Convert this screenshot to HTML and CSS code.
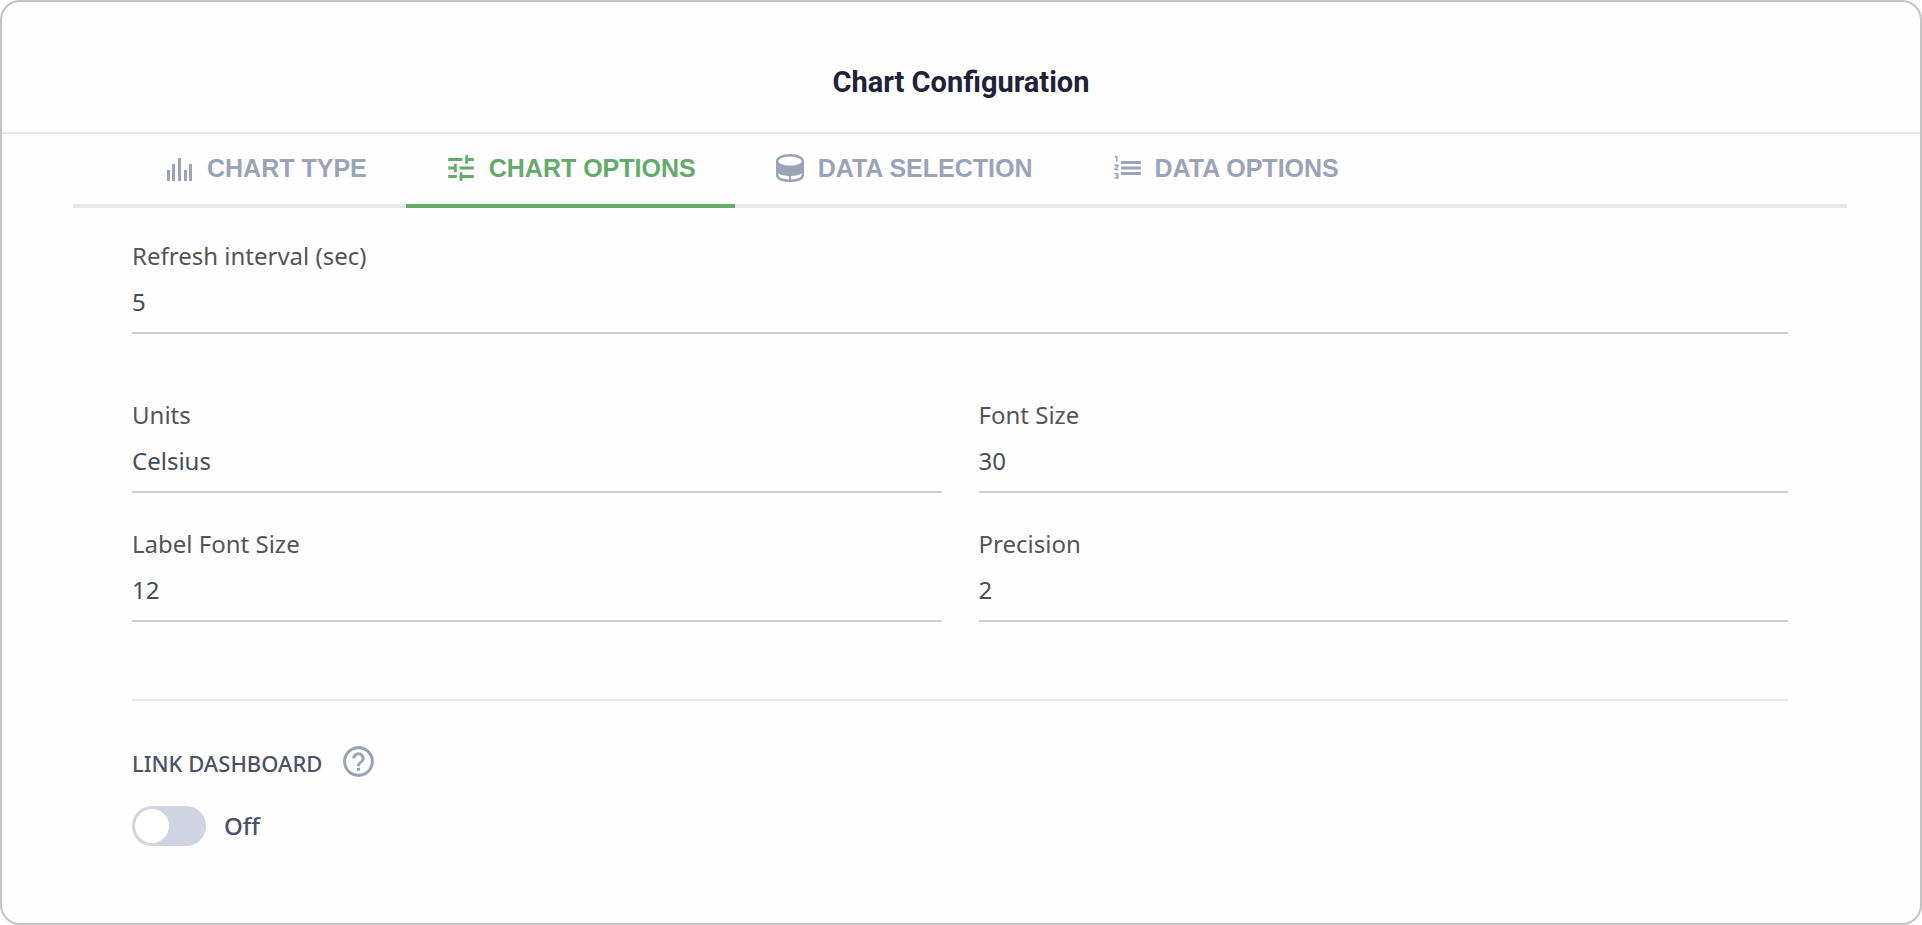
FILE: index.html
```
<!DOCTYPE html>
<html lang="en">
<head>
<meta charset="utf-8">
<title>Chart Configuration</title>
<link rel="stylesheet" href="styles.css">
</head>
<body>
<main class="dialog">
  <header class="dialog-header">
    <h1 class="title">Chart Configuration</h1>
  </header>
  <nav class="tabs" role="tablist">
    <button class="tab" type="button" role="tab">
      <svg class="tab-icon" viewBox="0 0 34 34" aria-hidden="true"><path d="M5 19h3v11H5zM10 13h3v17h-3zM16 7h3v23h-3zM22 19h3v11h-3zM27 13h3v17h-3z"/></svg>
      CHART TYPE
    </button>
    <button class="tab active" type="button" role="tab" aria-selected="true">
      <svg class="tab-icon" viewBox="0 0 24 24" aria-hidden="true"><path d="M3 17v2h6v-2H3zM3 5v2h10V5H3zm10 16v-2h8v-2h-8v-2h-2v6h2zM7 9v2H3v2h4v2h2V9H7zm14 4v-2H11v2h10zm-6-4h2V7h4V5h-4V3h-2v6z"/></svg>
      CHART OPTIONS
    </button>
    <button class="tab" type="button" role="tab">
      <svg class="tab-icon" viewBox="0 0 34 34" aria-hidden="true"><path fill-rule="evenodd" d="M3 10C3 6 9 3 17 3s14 3 14 7v14c0 4.500-5 7-14 7S3 28.500 3 24zM5.500 10.200c0 2.500 5 4.300 11.500 4.300s11.500-1.800 11.500-4.300S23.500 5.800 17 5.800 5.500 7.700 5.500 10.200zM5.500 22.300v2c0 2 4 4 10.500 4.200v-3.500C11.500 24.900 7.800 24 5.500 22.300zM28.500 22.300v2c0 2-4 4-10.500 4.200v-3.500C22.500 24.900 26.200 24 28.500 22.300z"/></svg>
      DATA SELECTION
    </button>
    <button class="tab" type="button" role="tab">
      <svg class="tab-icon" viewBox="0 0 34 34" aria-hidden="true"><path d="M11 10h20v3H11zM11 15.500h20v3H11zM11 21h20v3H11z"/><path class="stroke" d="M5 6.500 6.800 5.700V10.500M4.500 14.200h3.500v.8L5 18v.5h3.500M4.500 22.700h3.300v2H5.800 7.800v2.300H4.500"/></svg>
      DATA OPTIONS
    </button>
  </nav>
  <form class="options">
    <div class="field refresh">
      <label for="refresh">Refresh interval (sec)</label>
      <input id="refresh" type="text" value="5">
    </div>
    <div class="grid">
      <div class="field">
        <label for="units">Units</label>
        <input id="units" type="text" value="Celsius">
      </div>
      <div class="field">
        <label for="font-size">Font Size</label>
        <input id="font-size" type="text" value="30">
      </div>
      <div class="field">
        <label for="label-font-size">Label Font Size</label>
        <input id="label-font-size" type="text" value="12">
      </div>
      <div class="field">
        <label for="precision">Precision</label>
        <input id="precision" type="text" value="2">
      </div>
    </div>
    <section class="link">
      <div class="link-head">
        <h2 class="link-title">LINK DASHBOARD</h2>
        <button class="help" type="button" aria-label="Help">
          <svg class="help-icon" viewBox="0 0 24 24" aria-hidden="true"><path d="M11 18h2v-2h-2v2zm1-16C6.480 2 2 6.480 2 12s4.480 10 10 10 10-4.480 10-10S17.520 2 12 2zm0 18c-4.410 0-8-3.590-8-8s3.590-8 8-8 8 3.590 8 8-3.590 8-8 8zm0-14c-2.210 0-4 1.790-4 4h2c0-1.100.9-2 2-2s2 .9 2 2c0 2-3 1.750-3 5h2c0-2.250 3-2.500 3-5 0-2.210-1.790-4-4-4z"/></svg>
        </button>
      </div>
      <label class="switch">
        <input class="toggle" type="checkbox" role="switch">
        Off
      </label>
    </section>
  </form>
</main>
</body>
</html>
```
FILE: styles.css
```
* { box-sizing: border-box; }

body {
  margin: 0;
  background: #fff;
  font-family: "Noto Sans", "Open Sans", sans-serif;
}

.dialog {
  min-height: 100vh;
  border: 2px solid #c4c4c4;
  border-radius: 20px;
  background: #fefefe;
}

.dialog-header {
  padding: 60px 24px 30px;
  border-bottom: 2px solid #e5e7eb;
}

.title {
  margin: 0;
  font: 700 29px/40px Roboto, sans-serif;
  text-align: center;
  color: #1e2338;
}

.tabs {
  display: flex;
  margin: 0 73px 0 71px;
  padding-left: 51px;
  border-bottom: 4px solid #e5e7eb;
}

.tab {
  display: flex;
  align-items: center;
  gap: 11px;
  height: 74px;
  margin-bottom: -4px;
  padding: 0 39px 2px 38px;
  border: 0;
  border-bottom: 4px solid transparent;
  background: none;
  font: 700 25px/32px "Liberation Sans", Arial, sans-serif;
  color: #9ba3b7;
}

.tab.active {
  color: #64aa68;
  border-bottom-color: #64aa68;
}

.tab-icon {
  width: 34px;
  height: 34px;
  fill: currentColor;
}

.stroke {
  fill: none;
  stroke: currentColor;
  stroke-width: 1.5;
}

.options {
  padding: 31px 132px 72px 130px;
}

.field {
  display: flex;
  flex-direction: column;
  border-bottom: 2px solid #cfcfcf;
}

.field label {
  font-size: 24px;
  line-height: 34px;
  color: #555;
}

.field input {
  width: 100%;
  height: 59px;
  padding: 0 0 2px;
  border: 0;
  outline: 0;
  background: none;
  font: inherit;
  font-size: 24px;
  color: #454c5c;
}

.refresh {
  margin-bottom: 64px;
}

.grid {
  display: grid;
  grid-template-columns: 1fr 1fr;
  gap: 34px 37px;
}

.link {
  margin-top: 77px;
  padding-top: 42px;
  border-top: 2px solid #e9e9e9;
}

.link-head {
  display: flex;
  gap: 18px;
}

.link-title {
  margin: 0;
  font-size: 22px;
  font-weight: 500;
  line-height: 40px;
  color: #4a5268;
}

.help {
  display: flex;
  align-self: flex-start;
  padding: 0;
  border: 0;
  background: none;
}

.help-icon {
  width: 37px;
  height: 37px;
  fill: #9ba3b7;
}

.switch {
  display: inline-flex;
  align-items: center;
  gap: 18px;
  margin-top: 23px;
  font-size: 24px;
  font-weight: 500;
  line-height: 40px;
  color: #4a5268;
}

.toggle {
  appearance: none;
  display: flex;
  align-items: center;
  width: 74px;
  height: 40px;
  margin: 0;
  padding: 3px;
  border-radius: 20px;
  background: #cfd4e0;
}

.toggle::before {
  content: "";
  width: 34px;
  height: 34px;
  border-radius: 50%;
  background: #fff;
}

.toggle:checked {
  justify-content: flex-end;
  background: #64aa68;
}
```
